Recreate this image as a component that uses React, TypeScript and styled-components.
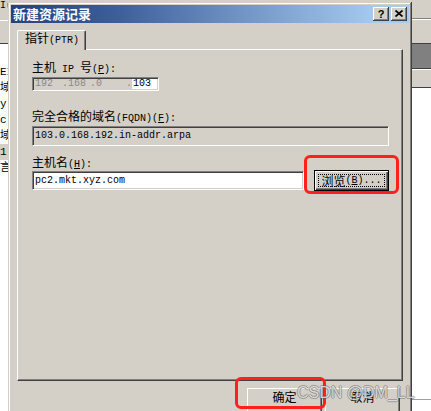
import React from "react";
import styled, { createGlobalStyle } from "styled-components";

const FACE = "#d4d0c8";
const CJK = `"Noto Sans CJK SC", "Noto Sans", sans-serif`;
const MONO = `"Liberation Mono", "Noto Sans CJK SC", monospace`;

const GlobalStyle = createGlobalStyle`
  html, body { margin: 0; padding: 0; background: ${FACE}; overflow: hidden; }
  body { width: 431px; height: 411px; }
`;

const Desktop = styled.div`
  position: relative;
  display: grid;
  grid-template-columns: 8px 404px 19px;
  width: 431px;
  height: 411px;
  overflow: hidden;
  background: ${FACE};
  font-family: ${MONO};
  font-size: 10px;
  color: #000;
`;

/* ---------- background application (left / right strips) ---------- */
const LeftStrip = styled.div`
  display: flex;
  flex-direction: column;
  overflow: hidden;
`;
const LeftToolbar = styled.div`
  height: 44px;
  flex: none;
  box-sizing: border-box;
  background: ${FACE};
  border-bottom: 1px solid #404040;
  display: flex;
  flex-direction: column;
`;
const Frag = styled.div`
  height: 11px;
  line-height: 11px;
  white-space: nowrap;
  font-size: 10px;
`;
const HRule = styled.div<{ $top: number; $color: string }>`
  height: 1px;
  margin-top: ${(p) => p.$top}px;
  background: ${(p) => p.$color};
`;
const LeftList = styled.div`
  flex: 1;
  background: #fff;
  padding-top: 20px;
  display: flex;
  flex-direction: column;
`;
const ListRow = styled.div<{ $selected?: boolean }>`
  height: 16px;
  line-height: 16px;
  white-space: nowrap;
  overflow: hidden;
  font-family: ${MONO};
  font-size: 11px;
  background: ${(p) => (p.$selected ? FACE : "transparent")};
`;

const RightStrip = styled.div`
  display: flex;
  flex-direction: column;
  overflow: hidden;
`;
const Band = styled.div<{ $h: number; $bg: string; $top?: string; $bottom?: string; $hi?: boolean }>`
  flex: none;
  box-sizing: border-box;
  height: ${(p) => p.$h}px;
  background: ${(p) => p.$bg};
  border-top: ${(p) => (p.$top ? `1px solid ${p.$top}` : "none")};
  border-bottom: ${(p) => (p.$bottom ? `1px solid ${p.$bottom}` : "none")};
  box-shadow: ${(p) => (p.$hi ? "inset 0 1px #fff" : "none")};
`;

/* ---------- dialog ---------- */
const Center = styled.div`
  display: flex;
  flex-direction: column;
  min-width: 0;
`;
const TopBand = styled.div`
  height: 2px;
  flex: none;
  background: ${FACE};
`;
const Dialog = styled.div`
  flex: none;
  background: ${FACE};
  padding: 3px;
  box-shadow: inset -1px -1px #404040, inset 1px 1px ${FACE}, inset -2px -2px #808080,
    inset 2px 2px #fff;
  display: flex;
  flex-direction: column;
`;
const TitleBar = styled.div`
  height: 18px;
  display: flex;
  align-items: center;
  padding: 0 2px;
  background: linear-gradient(to right, #23427f 0%, #3b5b99 25%, #7597c8 60%, #a6caf0 92%);
`;
const TitleText = styled.div`
  flex: 1;
  color: #fff;
  font-family: ${CJK};
  font-weight: 700;
  font-size: 13px;
  line-height: 18px;
  white-space: nowrap;
`;
const CaptionButton = styled.div`
  width: 16px;
  height: 14px;
  box-sizing: border-box;
  margin-left: 2px;
  background: ${FACE};
  box-shadow: inset -1px -1px #404040, inset 1px 1px #fff, inset -2px -2px #808080;
  display: flex;
  align-items: center;
  justify-content: center;
  font-family: "Liberation Sans", Arial, sans-serif;
  font-weight: 700;
  font-size: 11px;
  line-height: 12px;
  color: #000;
  padding-bottom: 1px;
`;

const Body = styled.div`
  padding: 7px 6px 0;
  display: flex;
  flex-direction: column;
`;
const TabStrip = styled.div`
  height: 19px;
  display: flex;
  position: relative;
  z-index: 1;
`;
const Tab = styled.div`
  width: 69px;
  height: 20px;
  box-sizing: border-box;
  background: ${FACE};
  border-top: 1px solid #fff;
  border-left: 1px solid #fff;
  border-right: 1px solid #404040;
  border-radius: 2px 2px 0 0;
  box-shadow: inset -1px 0 #808080;
  padding-left: 7px;
  font-family: ${CJK};
  font-size: 12px;
  line-height: 14px;
  white-space: nowrap;
`;
const Panel = styled.div`
  height: 332px;
  box-sizing: border-box;
  border-top: 1px solid #fff;
  border-left: 1px solid #fff;
  border-right: 1px solid #404040;
  border-bottom: 1px solid #404040;
  box-shadow: inset -1px -1px #808080;
  padding: 10px 13px 0 14px;
  display: flex;
  flex-direction: column;
`;

const Lat = styled.span`
  font-family: "Liberation Mono", monospace;
  font-size: 10px;
  line-height: 0;
`;
const Key = styled.span`
  text-decoration: underline;
  text-underline-offset: 1px;
`;
const FieldLabel = styled.div<{ $gap?: number }>`
  height: 14px;
  line-height: 14px;
  margin-top: ${(p) => p.$gap ?? 0}px;
  font-family: ${CJK};
  font-size: 12px;
  white-space: nowrap;
`;

const sunken = `
  box-sizing: border-box;
  border: 1px solid;
  border-color: #808080 #fff #fff #808080;
  box-shadow: inset 1px 1px #404040, inset -1px -1px ${FACE};
`;

const IpBox = styled.div`
  ${sunken}
  margin-top: 3px;
  width: 127px;
  height: 14px;
  padding: 1px;
  display: flex;
  align-items: stretch;
  background: ${FACE};
  font-family: ${MONO};
  font-size: 10px;
  line-height: 10px;
  color: #8a8a8a;
  white-space: pre;
`;
const Octet = styled.span<{ $w: number; $lead?: number }>`
  width: ${(p) => p.$w}px;
  margin-left: ${(p) => p.$lead ?? 0}px;
  flex: none;
`;
const OctetEdit = styled.span`
  flex: 1;
  background: #fff;
  color: #000;
  padding-left: 1px;
`;

const TextBox = styled.div<{ $w: number; $h: number; $readOnly?: boolean }>`
  ${sunken}
  width: ${(p) => p.$w}px;
  height: ${(p) => p.$h}px;
  flex: none;
  padding-left: 2px;
  background: ${(p) => (p.$readOnly ? FACE : "#fff")};
  font-family: ${MONO};
  font-size: 10px;
  line-height: ${(p) => p.$h - 2}px;
  white-space: nowrap;
`;
const FqdnBox = styled(TextBox)`
  margin-top: 3px;
`;

const HostRow = styled.div`
  display: flex;
  align-items: center;
  margin-top: 1px;
`;
const Anchor = styled.div<{ $ml?: number }>`
  position: relative;
  display: flex;
  margin-left: ${(p) => p.$ml ?? 0}px;
`;
const Annotation = styled.div<{ $l: number; $r: number; $t: number; $b: number }>`
  position: absolute;
  left: ${(p) => p.$l}px;
  right: ${(p) => p.$r}px;
  top: ${(p) => p.$t}px;
  bottom: ${(p) => p.$b}px;
  border: 3px solid #ff1f1f;
  border-radius: 6px;
  pointer-events: none;
  z-index: 2;
`;

const DefaultButton = styled.div`
  width: 75px;
  height: 21px;
  box-sizing: border-box;
  border: 1px solid #000;
  background: ${FACE};
  box-shadow: inset 1px 1px #fff, inset -1px -1px #404040, inset -2px -2px #808080;
  padding: 3px;
  display: flex;
  font-family: ${CJK};
  font-size: 12px;
`;
const FocusRing = styled.span`
  flex: 1;
  border: 1px dotted #000;
  display: flex;
  align-items: center;
  justify-content: center;
  line-height: 11px;
  white-space: nowrap;
`;

const ButtonRow = styled.div`
  display: flex;
  justify-content: flex-end;
  gap: 3px;
  margin-top: 7px;
  padding-right: 3px;
`;
const PushButton = styled.div`
  width: 75px;
  height: 25px;
  box-sizing: border-box;
  background: ${FACE};
  box-shadow: inset -1px -1px #404040, inset 1px 1px #fff, inset -2px -2px #808080;
  padding-top: 2px;
  text-align: center;
  font-family: ${CJK};
  font-size: 12px;
  line-height: 14px;
`;

const Watermark = styled.div`
  position: absolute;
  left: 297px;
  top: 385px;
  font-family: "Liberation Sans", Arial, sans-serif;
  font-size: 16px;
  line-height: 16px;
  white-space: nowrap;
  color: rgba(255, 255, 255, 0.72);
  text-shadow: 1px 0 rgba(90, 90, 90, 0.45), -1px 0 rgba(90, 90, 90, 0.45),
    0 1px rgba(90, 90, 90, 0.45), 0 -1px rgba(90, 90, 90, 0.45);
  pointer-events: none;
  z-index: 3;
`;

const CloseGlyph = () => (
  <svg width="8" height="7" viewBox="0 0 8 7">
    <path d="M0.5 0.5 L7.5 6.5 M7.5 0.5 L0.5 6.5" stroke="#000" strokeWidth="1.7" fill="none" />
  </svg>
);

export default function App() {
  return (
    <>
      <GlobalStyle />
      <Desktop>
        <LeftStrip>
          <LeftToolbar>
            <Frag>I(</Frag>
            <HRule $top={9} $color="#fff" />
          </LeftToolbar>
          <LeftList>
            <ListRow>EI</ListRow>
            <ListRow>域[</ListRow>
            <ListRow>y</ListRow>
            <ListRow>c</ListRow>
            <ListRow>域[</ListRow>
            <ListRow $selected>1(</ListRow>
            <ListRow>言!</ListRow>
          </LeftList>
        </LeftStrip>

        <Center>
          <TopBand />
          <Dialog>
            <TitleBar>
              <TitleText>新建资源记录</TitleText>
              <CaptionButton>?</CaptionButton>
              <CaptionButton>
                <CloseGlyph />
              </CaptionButton>
            </TitleBar>
            <Body>
              <TabStrip>
                <Tab>
                  指针<Lat>(PTR)</Lat>
                </Tab>
              </TabStrip>
              <Panel>
                <FieldLabel>
                  主机<Lat> IP </Lat>号<Lat>(<Key>P</Key>):</Lat>
                </FieldLabel>
                <IpBox>
                  <Octet $w={27} $lead={1}>192</Octet>
                  <Octet $w={28}>.168</Octet>
                  <Octet $w={36}>.0</Octet>
                  <Octet $w={6}>.</Octet>
                  <OctetEdit>103</OctetEdit>
                </IpBox>
                <FieldLabel $gap={18}>
                  完全合格的域名<Lat>(FQDN)(<Key>F</Key>):</Lat>
                </FieldLabel>
                <FqdnBox $w={357} $h={20} $readOnly>
                  103.0.168.192.in-addr.arpa
                </FqdnBox>
                <FieldLabel $gap={9}>
                  主机名<Lat>(<Key>H</Key>):</Lat>
                </FieldLabel>
                <HostRow>
                  <TextBox $w={272} $h={19}>
                    pc2.mkt.xyz.com
                  </TextBox>
                  <Anchor $ml={10}>
                    <DefaultButton>
                      <FocusRing>
                        浏览<Lat>(<Key>B</Key>)...</Lat>
                      </FocusRing>
                    </DefaultButton>
                    <Annotation $l={-10} $r={-10} $t={-15} $b={-3} />
                  </Anchor>
                </HostRow>
              </Panel>
              <ButtonRow>
                <Anchor>
                  <PushButton>确定</PushButton>
                  <Annotation $l={-12} $r={-4} $t={-11} $b={4} />
                </Anchor>
                <PushButton>取消</PushButton>
              </ButtonRow>
            </Body>
          </Dialog>
        </Center>

        <RightStrip>
          <Band $h={19} $bg={FACE} $bottom="#808080" />
          <Band $h={25} $bg={FACE} $top="#fff" $bottom="#404040" />
          <Band $h={24} $bg="#808080" />
          <Band $h={20} $bg={FACE} $top="#404040" $bottom="#404040" $hi />
          <Band $h={311} $bg="#fff" />
          <Band $h={12} $bg="#fff" $top="#a0a0a0" />
        </RightStrip>
        <Watermark>CSDN @DM_LL</Watermark>
      </Desktop>
    </>
  );
}
